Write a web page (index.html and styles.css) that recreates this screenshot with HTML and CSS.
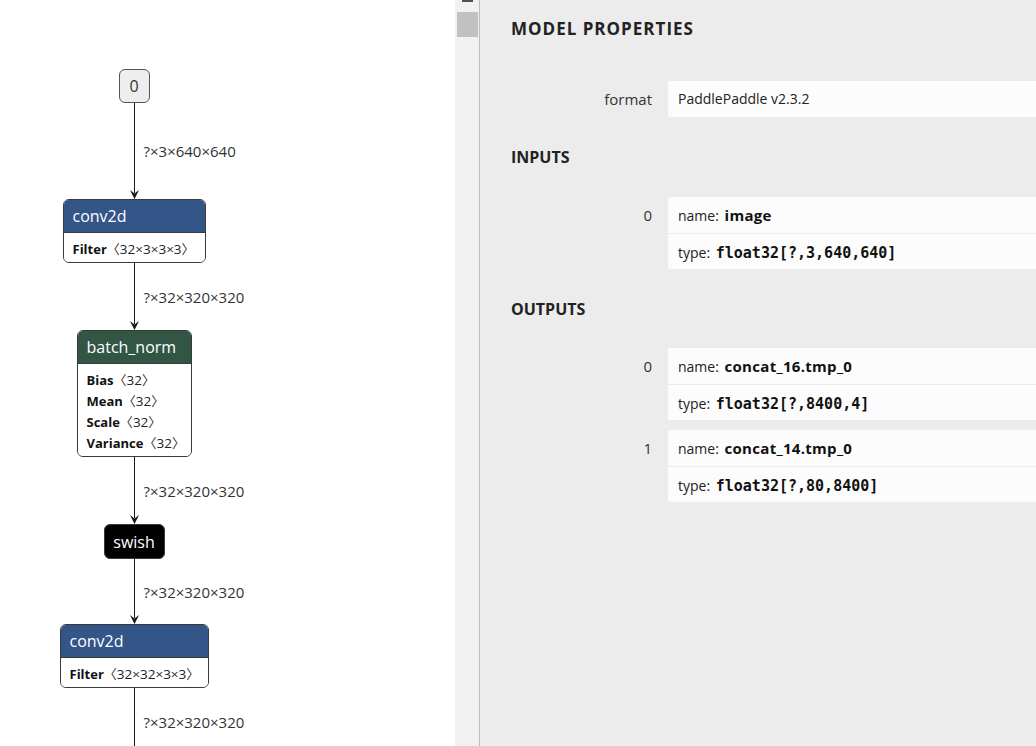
FILE: index.html
```html
<!DOCTYPE html>
<html>
<head>
<meta charset="utf-8">
<link rel="stylesheet" href="styles.css">
</head>
<body>
<div class="app">
  <div class="graph">
    <div class="flow">
      <div class="node input">0</div>
      <div class="edge e-long">
        <div class="wire"><div class="line"></div><svg class="arrow" width="9" height="9" viewBox="0 0 9 9"><path d="M0 0 L4.5 9 L9 0 L4.5 3.5 Z"/></svg></div>
        <span class="elabel">?×3×640×640</span>
      </div>
      <div class="node op w-conv1">
        <div class="head layer">conv2d</div>
        <div class="attrs"><div class="attr"><b>Filter</b><span class="br">〈</span>32×3×3×3<span class="br">〉</span></div></div>
      </div>
      <div class="edge e-67">
        <div class="wire"><div class="line"></div><svg class="arrow" width="9" height="9" viewBox="0 0 9 9"><path d="M0 0 L4.5 9 L9 0 L4.5 3.5 Z"/></svg></div>
        <span class="elabel">?×32×320×320</span>
      </div>
      <div class="node op w-bn">
        <div class="head norm">batch_norm</div>
        <div class="attrs">
          <div class="attr"><b>Bias</b><span class="br">〈</span>32<span class="br">〉</span></div>
          <div class="attr"><b>Mean</b><span class="br">〈</span>32<span class="br">〉</span></div>
          <div class="attr"><b>Scale</b><span class="br">〈</span>32<span class="br">〉</span></div>
          <div class="attr"><b>Variance</b><span class="br">〈</span>32<span class="br">〉</span></div>
        </div>
      </div>
      <div class="edge e-67">
        <div class="wire"><div class="line"></div><svg class="arrow" width="9" height="9" viewBox="0 0 9 9"><path d="M0 0 L4.5 9 L9 0 L4.5 3.5 Z"/></svg></div>
        <span class="elabel">?×32×320×320</span>
      </div>
      <div class="node act">swish</div>
      <div class="edge e-65">
        <div class="wire"><div class="line"></div><svg class="arrow" width="9" height="9" viewBox="0 0 9 9"><path d="M0 0 L4.5 9 L9 0 L4.5 3.5 Z"/></svg></div>
        <span class="elabel">?×32×320×320</span>
      </div>
      <div class="node op w-conv2">
        <div class="head layer">conv2d</div>
        <div class="attrs"><div class="attr"><b>Filter</b><span class="br">〈</span>32×32×3×3<span class="br">〉</span></div></div>
      </div>
      <div class="edge e-67">
        <div class="wire"><div class="line"></div></div>
        <span class="elabel">?×32×320×320</span>
      </div>
    </div>
  </div>
  <div class="scrollbar">
    <div class="sb-arrow"></div>
    <div class="sb-thumb"></div>
  </div>
  <div class="sidebar">
    <div class="title">MODEL PROPERTIES</div>
    <div class="prop">
      <div class="plabel">format</div>
      <div class="pbox"><div class="prow">PaddlePaddle v2.3.2</div></div>
    </div>
    <div class="section">INPUTS</div>
    <div class="prop">
      <div class="plabel">0</div>
      <div class="pbox">
        <div class="prow">name: <b>image</b></div>
        <div class="prow">type: <code>float32[?,3,640,640]</code></div>
      </div>
    </div>
    <div class="section sec-out">OUTPUTS</div>
    <div class="props">
      <div class="prop">
        <div class="plabel">0</div>
        <div class="pbox">
          <div class="prow">name: <b>concat_16.tmp_0</b></div>
          <div class="prow">type: <code>float32[?,8400,4]</code></div>
        </div>
      </div>
      <div class="prop">
        <div class="plabel">1</div>
        <div class="pbox">
          <div class="prow">name: <b>concat_14.tmp_0</b></div>
          <div class="prow">type: <code>float32[?,80,8400]</code></div>
        </div>
      </div>
    </div>
  </div>
</div>
</body>
</html>
```
FILE: styles.css
```css
html, body {
  margin: 0;
  padding: 0;
  width: 1036px;
  height: 746px;
  overflow: hidden;
  background: #ffffff;
}
body {
  font-family: "Open Sans", "Noto Sans", sans-serif;
  color: #222;
}
.app {
  display: flex;
  height: 746px;
  overflow: hidden;
}
.graph {
  width: 455px;
  flex: none;
  background: #fff;
  overflow: hidden;
}
.flow {
  width: 268px;
  padding-top: 69px;
  display: flex;
  flex-direction: column;
  align-items: center;
}
.node {
  box-sizing: border-box;
  border: 1px solid #3a3a3a;
  border-radius: 6px;
  overflow: hidden;
}
.node.input {
  width: 31px;
  height: 34px;
  background: #eeeeee;
  border-color: #555;
  display: flex;
  align-items: center;
  justify-content: center;
  font-size: 16px;
  color: #333;
}
.node.act {
  width: 61px;
  height: 35px;
  background: #000;
  color: #fff;
  display: flex;
  align-items: center;
  justify-content: center;
  font-size: 16px;
}
.w-conv1 { width: 143px; }
.w-conv2 { width: 149px; }
.w-bn { width: 115px; }
.head {
  height: 34px;
  box-sizing: border-box;
  border-bottom: 1px solid #3a3a3a;
  color: #fff;
  font-size: 16px;
  line-height: 33px;
  padding-left: 9px;
  margin-top: -1px;
  padding-top: 1px;
}
.head.layer { background: #335588; }
.head.norm { background: #335544; }
.attrs {
  background: #fff;
  padding: 6px 0 2px 9px;
}
.attr {
  height: 21px;
  font-size: 13.5px;
  line-height: 21px;
  color: #222;
  white-space: nowrap;
}
.attr b { font-weight: 700; font-size: 13px; color: #111; }
.attr .br {
  font-family: "Noto Sans CJK SC", "Noto Sans CJK JP", sans-serif;
  font-size: 13px;
  line-height: 1;
  color: #333;
}
.edge {
  width: 268px;
  display: grid;
  grid-template-columns: 1fr 9px 1fr;
  align-items: center;
}
.e-long { height: 96px; }
.e-67 { height: 67px; }
.e-65 { height: 65px; }
.wire {
  grid-column: 2;
  height: 100%;
  display: flex;
  flex-direction: column;
  align-items: center;
}
.line {
  flex: 1;
  width: 1px;
  background: #1a1a1a;
}
.arrow { display: block; flex: none; fill: #1a1a1a; margin-top: -3px; }
.elabel {
  grid-column: 3;
  padding-left: 5px;
  font-size: 15px;
  color: #333;
  white-space: nowrap;
}
.scrollbar {
  width: 24px;
  flex: none;
  background: #f1f1f1;
  border-right: 1px solid #bdbdbd;
  display: flex;
  flex-direction: column;
}
.sb-arrow {
  width: 11px;
  height: 2px;
  margin-left: 7px;
  background: #505050;
}
.sb-thumb {
  width: 21px;
  height: 25px;
  margin: 10px 0 0 2px;
  background: #c1c1c1;
}
.sidebar {
  flex: none;
  width: 620px;
  background: #ececec;
  padding: 19px 0 0 31px;
  box-sizing: border-box;
}
.title {
  font-size: 17px;
  font-weight: 700;
  line-height: 20px;
  letter-spacing: 1px;
  color: #222;
  margin-bottom: 42px;
}
.section {
  font-size: 16px;
  font-weight: 700;
  line-height: 20px;
  color: #222;
  margin: 30px 0 30px 0;
}
.section.sec-out { margin-bottom: 29px; }
.props {
  display: flex;
  flex-direction: column;
  gap: 10px;
}
.prop {
  display: grid;
  grid-template-columns: 141px 1fr;
  column-gap: 16px;
}
.plabel {
  text-align: right;
  font-size: 15px;
  line-height: 36px;
  color: #333;
}
.pbox {
  background: #fcfcfc;
  border-radius: 3px;
  overflow: hidden;
}
.prow {
  height: 36px;
  line-height: 36px;
  padding-left: 10px;
  font-size: 14px;
  color: #222;
  white-space: nowrap;
}
.prow + .prow {
  border-top: 1px solid #ececec;
  height: 35px;
  line-height: 37px;
}
.prow b { font-weight: 700; font-size: 15px; letter-spacing: 0.3px; color: #111; margin-left: 2px; }
.prow code {
  font-family: "DejaVu Sans Mono", monospace;
  font-weight: 700;
  font-size: 15px;
  color: #111;
  margin-left: 2px;
}
```
